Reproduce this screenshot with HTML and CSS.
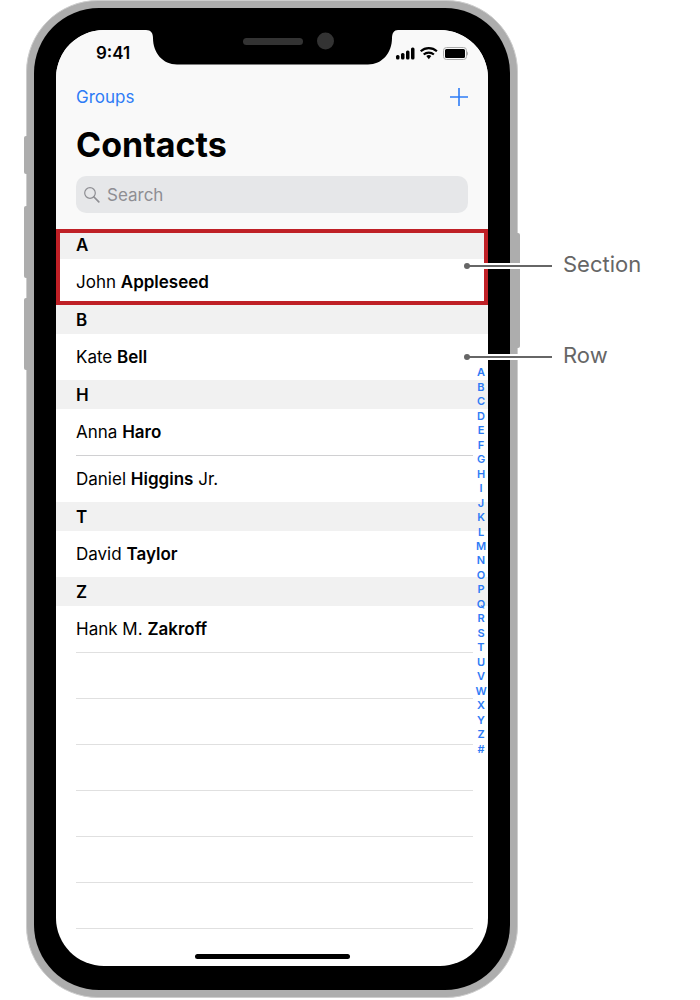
FILE: index.html
```html
<!DOCTYPE html>
<html lang="en">
<head>
    <meta charset="utf-8">
    <meta name="viewport" content="width=device-width, initial-scale=1">
    <title>Contacts</title>
    <link rel="stylesheet" href="styles.css">
</head>
<body>
<main class="diagram">
    <div class="phone">
        <span class="side-button mute-switch"></span>
        <span class="side-button volume-up"></span>
        <span class="side-button volume-down"></span>
        <span class="side-button power"></span>

        <div class="bezel">
            <div class="screen">
                <svg class="notch" width="252" height="35" viewBox="0 0 252 35" aria-hidden="true">
                    <path d="M0 0C5 0 7 3 7 8C7 23 17 34.500 31 34.500H222C236 34.500 246 23 246 8C246 3 248 0 252 0Z" fill="#000"/>
                    <rect x="97" y="8" width="60" height="7" rx="3.500" fill="#333"/>
                    <circle cx="179.500" cy="11" r="8.500" fill="#333"/>
                </svg>

                <header class="top">
                    <div class="status-bar">
                        <span class="time">9:41</span>
                        <svg class="status-icons" width="74" height="14" viewBox="0 0 74 14" aria-hidden="true">
                            <g fill="#000">
                                <rect x="2" y="9" width="3.500" height="4.500" rx="1.500"/>
                                <rect x="7" y="7" width="3.500" height="6.500" rx="1.500"/>
                                <rect x="12" y="4.500" width="3.500" height="9" rx="1.500"/>
                                <rect x="17" y="1.500" width="3.500" height="12" rx="1.500"/>
                                <path d="M32.300 10a4 4 0 0 1 5 0l-2.500 3.200z"/>
                            </g>
                            <g fill="none" stroke="#000" stroke-width="2.200">
                                <path d="M26.700 5.300c4.700-4.200 11.500-4.200 16.200 0"/>
                                <path d="M29.700 8.500c2.900-2.600 7.300-2.600 10.200 0"/>
                            </g>
                            <rect x="49.500" y="1.500" width="23" height="12" rx="3" fill="none" stroke="#aaa"/>
                            <rect x="51" y="3" width="20" height="9" rx="1.500" fill="#000"/>
                            <path d="M73 5.500c1.300.7 1.300 3.300 0 4z" fill="#aaa"/>
                        </svg>
                    </div>
                    <div class="nav-bar">
                        <button class="nav-button" type="button">Groups</button>
                        <button class="nav-button" type="button" aria-label="Add contact">
                            <svg width="18" height="18" viewBox="0 0 18 18"><path d="M9 0v18M0 9h18" stroke="#2e7cf6" stroke-width="1.600"/></svg>
                        </button>
                    </div>
                    <h1>Contacts</h1>
                    <label class="search">
                        <svg width="16" height="16" viewBox="0 0 16 16" fill="none" stroke="#8e8e93" stroke-linecap="round" aria-hidden="true">
                            <circle cx="6" cy="6" r="5.300" stroke-width="1.200"/>
                            <path d="M10 10l4.800 4.800" stroke-width="1.700"/>
                        </svg>
                        <input type="search" placeholder="Search" aria-label="Search">
                    </label>
                </header>

                <div class="contacts">
                    <section class="group highlighted">
                        <h2>A</h2>
                        <ul>
                            <li>John <b>Appleseed</b></li>
                        </ul>
                    </section>
                    <section class="group">
                        <h2>B</h2>
                        <ul>
                            <li>Kate <b>Bell</b></li>
                        </ul>
                    </section>
                    <section class="group">
                        <h2>H</h2>
                        <ul>
                            <li>Anna <b>Haro</b></li>
                            <li>Daniel <b>Higgins</b> Jr.</li>
                        </ul>
                    </section>
                    <section class="group">
                        <h2>T</h2>
                        <ul>
                            <li>David <b>Taylor</b></li>
                        </ul>
                    </section>
                    <section class="group">
                        <h2>Z</h2>
                        <ul>
                            <li>Hank M. <b>Zakroff</b></li>
                        </ul>
                    </section>
                    <div class="empty-rows">
                        <div></div>
                        <div></div>
                        <div></div>
                        <div></div>
                        <div></div>
                        <div></div>
                    </div>

                    <nav class="index" aria-label="Letters">
                        <a href="#">A</a>
                        <a href="#">B</a>
                        <a href="#">C</a>
                        <a href="#">D</a>
                        <a href="#">E</a>
                        <a href="#">F</a>
                        <a href="#">G</a>
                        <a href="#">H</a>
                        <a href="#">I</a>
                        <a href="#">J</a>
                        <a href="#">K</a>
                        <a href="#">L</a>
                        <a href="#">M</a>
                        <a href="#">N</a>
                        <a href="#">O</a>
                        <a href="#">P</a>
                        <a href="#">Q</a>
                        <a href="#">R</a>
                        <a href="#">S</a>
                        <a href="#">T</a>
                        <a href="#">U</a>
                        <a href="#">V</a>
                        <a href="#">W</a>
                        <a href="#">X</a>
                        <a href="#">Y</a>
                        <a href="#">Z</a>
                        <a href="#">#</a>
                    </nav>
                </div>

                <div class="home-area"><span class="home-indicator"></span></div>
            </div>
        </div>

        <div class="callout callout-section"><span class="leader"></span>Section</div>
        <div class="callout callout-row"><span class="leader"></span>Row</div>
    </div>
</main>
</body>
</html>
```
FILE: styles.css
```css
* {
    box-sizing: border-box;
}

body {
    margin: 0;
    background: #fff;
    color: #000;
    font-family: Inter, "Liberation Sans", sans-serif;
    font-size: 17px;
}

h1, h2, ul {
    margin: 0;
    padding: 0;
}

.diagram {
    padding: 0 156px 2px 26px;
}

/* Phone body */
.phone {
    position: relative;
    max-width: 492px;
    padding: 7px;
    border: 1px solid #cdcdcd;
    border-radius: 72px;
    background: #adadad;
}

.bezel {
    padding: 22px 22px 24px;
    border-radius: 65px;
    background: #000;
}

.screen {
    position: relative;
    overflow: hidden;
    border-radius: 48px;
    background: #fff;
}

.side-button {
    position: absolute;
    left: -3px;
    width: 3px;
    height: 72px;
    border-radius: 2px 0 0 2px;
    background: #adadad;
}

.mute-switch {
    top: 135px;
    height: 38px;
}

.volume-up {
    top: 205px;
}

.volume-down {
    top: 297px;
}

.power {
    top: 232px;
    left: auto;
    right: -3px;
    height: 115px;
    border-radius: 0 2px 2px 0;
}

.notch {
    position: absolute;
    top: 0;
    left: calc(50% - 126px);
}

/* Header */
.top {
    height: 200px;
    padding: 13px 20px 0;
    background: #f9f9f9;
}

.status-bar,
.nav-bar {
    display: flex;
    align-items: center;
    justify-content: space-between;
}

.status-bar {
    height: 20px;
    padding-left: 20px;
}

.time {
    font-size: 17px;
    font-weight: 600;
}

.nav-bar {
    height: 24px;
    margin-top: 22px;
}

.nav-button {
    display: flex;
    padding: 0;
    border: 0;
    background: none;
    color: #2e7cf6;
    font: inherit;
    line-height: 24px;
}

h1 {
    margin-top: 14px;
    font-size: 34px;
    font-weight: 700;
    line-height: 44px;
}

.search {
    display: flex;
    align-items: center;
    gap: 7px;
    height: 37px;
    margin-top: 9px;
    padding: 0 8px;
    border-radius: 10px;
    background: #e6e7e9;
}

.search input {
    flex: 1;
    min-width: 0;
    padding: 0;
    border: 0;
    outline: 0;
    background: none;
    font: inherit;
}

.search input::placeholder {
    color: #8e8e93;
}

/* List */
.contacts {
    position: relative;
}

.group {
    position: relative;
}

h2 {
    padding: 2px 0 0 20px;
    background: #f1f1f1;
    font-size: 17px;
    font-weight: 600;
    line-height: 27px;
}

ul {
    list-style: none;
}

li {
    height: 46px;
    margin: 0 15px 0 20px;
    line-height: 47px;
}

li + li {
    height: 47px;
    border-top: 1px solid #d0d0d2;
}

b {
    font-weight: 600;
}

.highlighted::after {
    content: "";
    position: absolute;
    inset: -1px 0 0;
    border: 4px solid #bf2026;
}

.empty-rows {
    margin: 0 15px 0 20px;
    border-top: 1px solid #e0e0e0;
}

.empty-rows div {
    height: 46px;
    border-bottom: 1px solid #e0e0e0;
}

.index {
    position: absolute;
    top: 135px;
    right: 0;
    display: grid;
    grid-auto-rows: 1fr;
    width: 14px;
    height: 391px;
    justify-items: center;
    align-items: center;
}

.index a {
    color: #2e7cf6;
    font-size: 11px;
    font-weight: 600;
    line-height: 14px;
    text-decoration: none;
}

.home-area {
    display: flex;
    justify-content: center;
    padding: 25px 0 7px;
}

.home-indicator {
    width: 155px;
    height: 5px;
    border-radius: 3px;
    background: #000;
}

/* Callouts */
.callout {
    position: absolute;
    left: calc(100% - 50px);
    display: flex;
    align-items: center;
    gap: 11px;
    color: #666;
    font-size: 22px;
    line-height: 28px;
}

.callout-section {
    top: 249px;
}

.callout-row {
    top: 340px;
}

.leader {
    position: relative;
    width: 85px;
    height: 2px;
    margin-top: 4px;
    background: #666;
    box-shadow: 0 0 0 2px #fff;
}

.leader::before {
    content: "";
    position: absolute;
    top: -2px;
    left: -3px;
    width: 6px;
    height: 6px;
    border-radius: 50%;
    background: #666;
}
```
